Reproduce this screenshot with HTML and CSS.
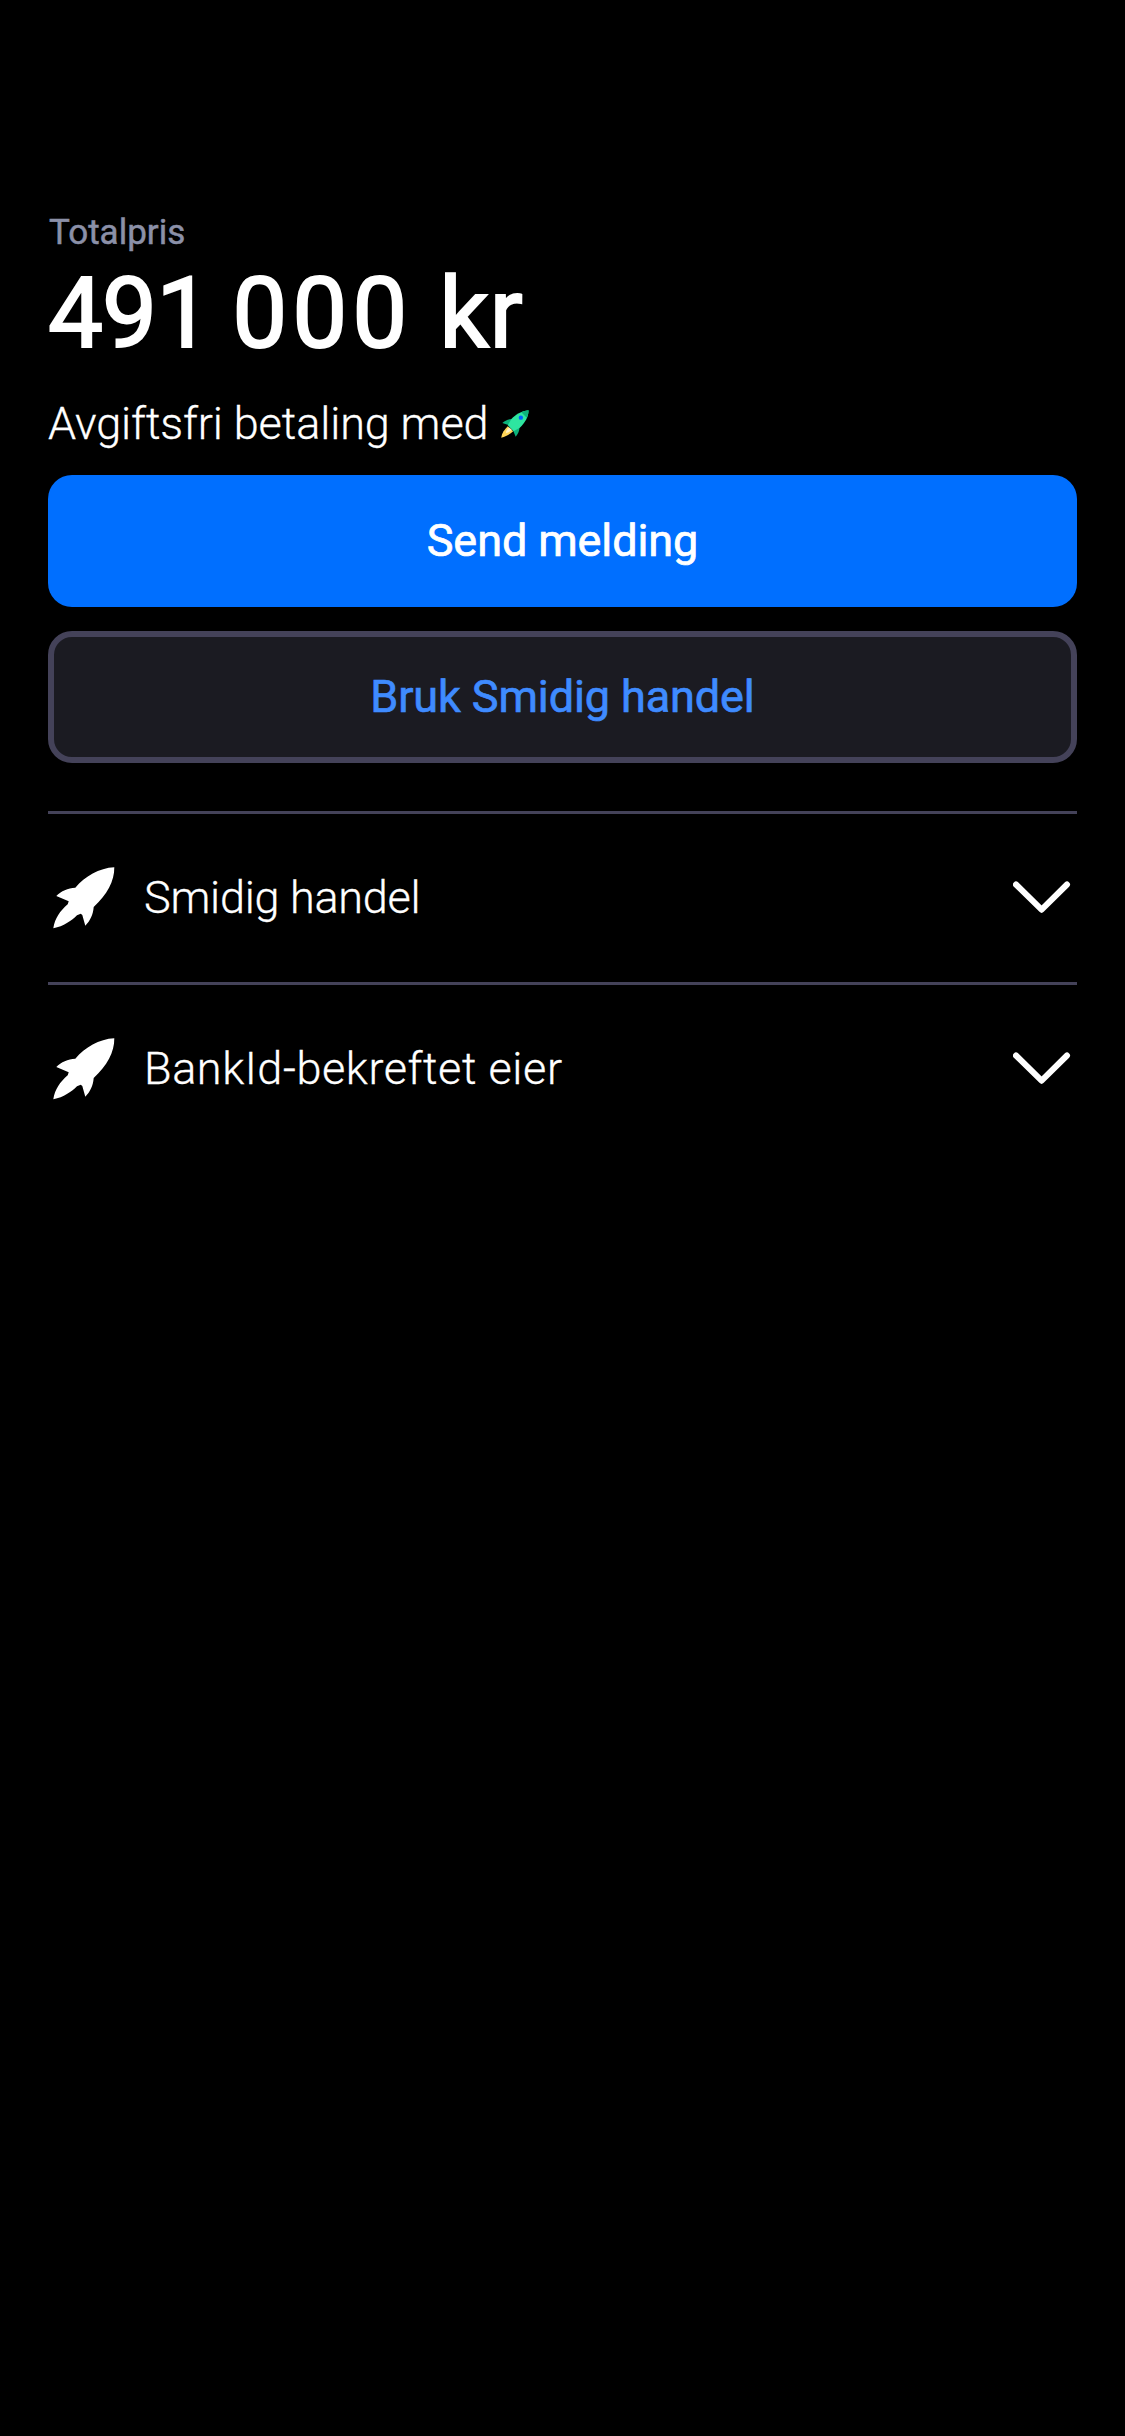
FILE: index.html
```
<!DOCTYPE html>
<html lang="nb">
<head>
<meta charset="utf-8">
<title>Totalpris</title>
<link rel="stylesheet" href="styles.css">
</head>
<body>
<main class="page">
  <p class="label">Totalpris</p>
  <h1 class="price"><span class="price-thousands">491</span> <span class="price-hundreds">000</span> kr</h1>
  <p class="note">
    <span>Avgiftsfri betaling med</span>
    <svg class="note-icon" viewBox="0 0 62 62" aria-hidden="true">
      <path fill="#ffd558" d="M15 36C8 43 2 50 .5 61.500C12 59 20 53 27 47Z"/>
      <path fill="#fff1c4" d="M18 39C13 43 11 47 11 51C16 50 20 48 24 44Z"/>
      <path fill="#0cb37c" d="M24 20C15 20 8 24 3 29L18 34ZM27 46L32.500 59C38 52 41 46 41 38Z"/>
      <path fill="#2ee5a0" d="M61 .5C45 2 32 10 22.500 20.500L15 34L28 47L41 40C54 27 61 15 61 .5Z"/>
      <path fill="#0cb37c" d="M61 .5C55 1 50 2.500 45 5L57 17C60 11 61 6 61 .5Z"/>
      <circle cx="44" cy="17" r="4.800" fill="#0063fb"/>
    </svg>
  </p>
  <div class="actions">
    <button class="button button-primary">Send melding</button>
    <button class="button button-secondary">Bruk Smidig handel</button>
  </div>
  <section class="list">
    <div class="row">
      <svg class="row-icon" viewBox="0 0 62 62" aria-hidden="true"><path d="M61.300 .3C46 1 32 9.500 22.300 20.700C15 21 8 24 3.300 29L15.700 34.300L14.700 37.300C7 44 2 51 .3 61.300C11 59 18 54 24 48.200L27.700 46.700L29.300 48L32.300 58.700C37 54 40 48 40.700 40C54 28 61.500 14 61.300 .3Z"/></svg>
      <span class="row-title">Smidig handel</span>
      <svg class="chevron" viewBox="0 0 58 34" aria-hidden="true"><path d="M3 3.500L28.600 28.700L54 3.500"/></svg>
    </div>
    <div class="row">
      <svg class="row-icon" viewBox="0 0 62 62" aria-hidden="true"><path d="M61.300 .3C46 1 32 9.500 22.300 20.700C15 21 8 24 3.300 29L15.700 34.300L14.700 37.300C7 44 2 51 .3 61.300C11 59 18 54 24 48.200L27.700 46.700L29.300 48L32.300 58.700C37 54 40 48 40.700 40C54 28 61.500 14 61.300 .3Z"/></svg>
      <span class="row-title row-title-wide">BankId-bekreftet eier</span>
      <svg class="chevron" viewBox="0 0 58 34" aria-hidden="true"><path d="M3 3.500L28.600 28.700L54 3.500"/></svg>
    </div>
  </section>
</main>
</body>
</html>
```
FILE: styles.css
```
* { box-sizing: border-box; margin: 0; padding: 0; }

body {
  background: #000;
  color: #fff;
  font-family: Roboto, sans-serif;
}

.page {
  display: flex;
  flex-direction: column;
  min-height: 2436px;
  padding: 210px 48px 0;
}

.label {
  padding-left: 1px;
  color: #8b90a8;
  font-size: 35px;
  line-height: 46px;
  -webkit-text-stroke: 0.5px currentColor;
}

.price {
  font-size: 98px;
  font-weight: 400;
  line-height: 116px;
  letter-spacing: 0.6px;
  -webkit-text-stroke: 2px currentColor;
}

.price-thousands { margin-right: -3px; letter-spacing: -1px; }

.price-hundreds { margin-right: 2px; letter-spacing: 5px; }

.note {
  display: flex;
  align-items: center;
  gap: 13px;
  margin-top: 22px;
  font-size: 45px;
  font-weight: 300;
  line-height: 60px;
  letter-spacing: -0.1px;
  -webkit-text-stroke: 0.3px currentColor;
}

.note-icon { width: 28px; height: 28px; }

.actions {
  display: flex;
  flex-direction: column;
  gap: 24px;
  margin-top: 21px;
}

.button {
  height: 132px;
  border: 0;
  border-radius: 24px;
  font: 400 45px/60px Roboto, sans-serif;
  letter-spacing: -0.1px;
  -webkit-text-stroke: 0.7px currentColor;
}

.button-primary { background: #006fff; color: #fff; }

.button-secondary {
  background: #1b1b22;
  border: 6px solid #444259;
  color: #3f8bff;
}

.list { margin-top: 48px; }

.row {
  display: flex;
  align-items: center;
  height: 171px;
  padding: 0 6px 0 5px;
  border-top: 3px solid #444259;
}

.row-icon { width: 62px; height: 62px; fill: #fff; }

.row-title {
  flex: 1;
  margin-left: 29px;
  font-size: 45px;
  font-weight: 300;
  line-height: 60px;
  letter-spacing: -0.25px;
  -webkit-text-stroke: 0.3px currentColor;
}

.row-title-wide { letter-spacing: 0.57px; }

.chevron {
  width: 58px;
  height: 34px;
  fill: none;
  stroke: #fff;
  stroke-width: 6px;
  stroke-linecap: round;
  stroke-linejoin: round;
}
```
